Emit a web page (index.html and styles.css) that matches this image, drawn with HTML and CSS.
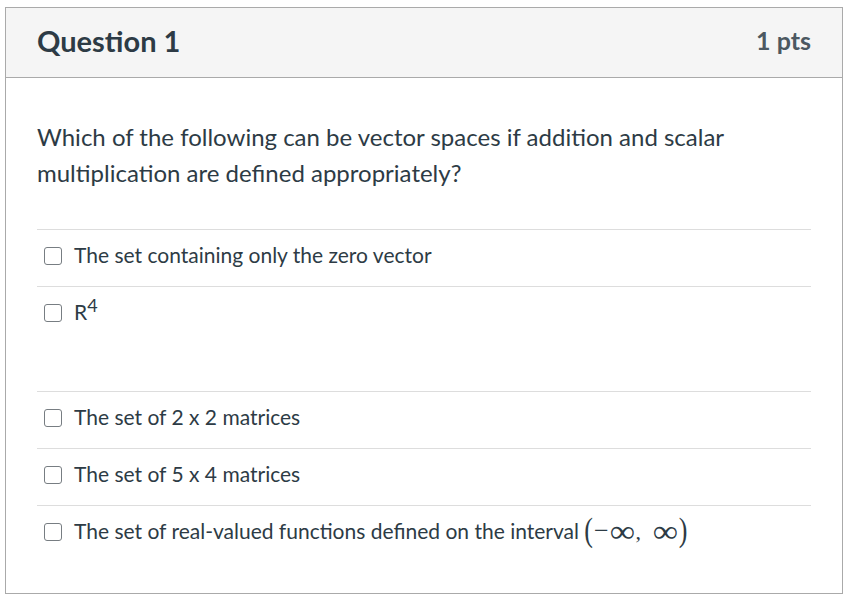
FILE: index.html
```html
<!DOCTYPE html>
<html>
<head>
<meta charset="utf-8">
<link rel="stylesheet" href="styles.css">
</head>
<body>
<div class="question">
  <div class="header">
    <h2 class="name">Question 1</h2>
    <span class="points">1 pts</span>
  </div>
  <div class="content">
    <p class="text">Which of the following can be vector spaces if addition and scalar multiplication are defined appropriately?</p>
    <div class="answers">
      <div class="answer"><span class="box"></span><span class="label">The set containing only the zero vector</span></div>
      <div class="answer tall"><span class="box"></span><span class="label">R<sup>4</sup></span></div>
      <div class="answer"><span class="box"></span><span class="label">The set of 2 x 2 matrices</span></div>
      <div class="answer"><span class="box"></span><span class="label">The set of 5 x 4 matrices</span></div>
      <div class="answer last"><span class="box"></span><span class="label">The set of real-valued functions defined on the interval <span class="math"><span class="paren">(</span><span class="minus">−</span><span class="inf">∞</span>,&nbsp; <span class="inf">∞</span><span class="paren">)</span></span></span></div>
    </div>
  </div>
</div>
</body>
</html>
```
FILE: styles.css
```css
html, body {
  margin: 0;
  padding: 0;
  background: #ffffff;
}
body {
  padding: 7px 7px 0 5px;
  font-family: Lato, "Noto Sans", sans-serif;
  color: #2d3b45;
}
.question {
  width: 836px;
  height: 585px;
  border: 1px solid #aaaaaa;
  display: flex;
  flex-direction: column;
}
.header {
  height: 70px;
  box-sizing: border-box;
  background: #f5f5f5;
  border-bottom: 1px solid #aaaaaa;
  display: flex;
  align-items: center;
  justify-content: space-between;
  padding: 0 31px 5px 31px;
}
.name {
  margin: 0;
  font-size: 29px;
  font-weight: 700;
  line-height: 1;
}
.points {
  font-size: 25px;
  font-weight: 700;
  color: #4c5861;
}
.content {
  padding: 41px 31px 0 31px;
}
.text {
  margin: 0;
  font-size: 24px;
  line-height: 36px;
}
.answers {
  margin-top: 38px;
}
.answer {
  border-top: 1px solid #dddddd;
  display: flex;
  align-items: flex-start;
  padding-top: 11px;
  height: 45px;
}
.answer.tall { height: 93px; }
.box {
  width: 16px;
  height: 16px;
  border: 1.5px solid #777d82;
  border-radius: 3px;
  margin: 6px 12px 0 7px;
  flex: none;
}
.label {
  font-size: 21px;
  line-height: 28px;
}
sup {
  font-size: 18px;
  line-height: 0;
  vertical-align: 8px;
}
.math {
  font-family: "Liberation Serif", serif;
  font-size: 22px;
}
.minus {
  font-family: "Liberation Serif", serif;
  font-size: 26px;
  line-height: 0;
  margin-left: 1px;
}
.inf {
  display: inline-block;
  font-family: "Liberation Serif", serif;
  font-size: 32px;
  line-height: 0;
  transform: translateY(3px) scaleX(1.1);
  margin: 0 2px 0 2px;
}
.paren {
  display: inline-block;
  font-size: 26px;
  line-height: 0;
  transform: scaleY(1.3);
  font-family: "Liberation Serif", serif;
}
```
